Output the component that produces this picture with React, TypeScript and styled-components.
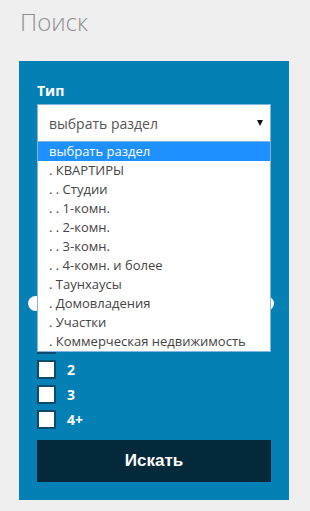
import React from 'react';
import styled, { createGlobalStyle } from 'styled-components';

const GlobalStyle = createGlobalStyle`
  html, body {
    margin: 0;
    padding: 0;
    background: #efefef;
  }
  body {
    font-family: "Open Sans", "Liberation Sans", sans-serif;
  }
`;

const Page = styled.div`
  width: 310px;
  height: 511px;
  overflow: hidden;
  padding: 0 21px 0 19px;
  box-sizing: border-box;
`;

const Title = styled.h2`
  margin: 0;
  padding: 6px 0 0 1px;
  height: 61px;
  box-sizing: border-box;
  font-size: 24px;
  line-height: 32px;
  font-weight: 300;
  color: #8f8f8f;
`;

const Panel = styled.form`
  background: #0580b5;
  padding: 20px 18px 18px;
  display: flex;
  flex-direction: column;
`;

const Label = styled.div`
  color: #fff;
  font-weight: 700;
  font-size: 14px;
  line-height: 20px;
  height: 23px;
`;

const SelectWrap = styled.div`
  position: relative;
`;

const SelectBox = styled.div`
  height: 38px;
  box-sizing: border-box;
  border: 1px solid #86b4dd;
  background: #fff;
  display: flex;
  align-items: center;
  justify-content: space-between;
  padding: 0 7px 0 11px;
  font-size: 14px;
  color: #555;
`;

const Arrow = styled.span`
  width: 0;
  height: 0;
  border-left: 3.5px solid transparent;
  border-right: 3.5px solid transparent;
  border-top: 6px solid #111;
  margin-top: -1px;
`;

const Options = styled.ul`
  position: absolute;
  top: 38px;
  left: 0;
  right: 0;
  margin: 0;
  padding: 0;
  list-style: none;
  background: #fff;
  border: 1px solid #86b4dd;
  border-top: none;
  z-index: 5;
`;

const Option = styled.li<{ $active?: boolean }>`
  height: 19px;
  line-height: 19px;
  padding-left: 11px;
  font-size: 13px;
  color: ${(p) => (p.$active ? '#fff' : '#444')};
  background: ${(p) => (p.$active ? '#1e90ff' : 'transparent')};
  white-space: nowrap;
`;

// area covered by the open dropdown: only the range slider peeks out
const Covered = styled.div`
  height: 193px;
  display: flex;
  flex-direction: column;
  justify-content: flex-end;
`;

const Slider = styled.div`
  position: relative;
  height: 6px;
  margin: 0 3px 29px -3px;
  background: #0b5d86;
`;

const Handle = styled.span<{ $side: 'left' | 'right' }>`
  position: absolute;
  top: -4px;
  ${(p) => (p.$side === 'left' ? 'left: -6px;' : 'right: -6px;')}
  width: 15px;
  height: 15px;
  border-radius: 50%;
  background: #fff;
`;

const Checks = styled.div`
  display: flex;
  flex-direction: column;
  gap: 6px;
`;

const CheckRow = styled.label`
  display: flex;
  align-items: center;
  gap: 11px;
  height: 19px;
  color: #fff;
  font-weight: 700;
  font-size: 14px;
`;

const Box = styled.span`
  width: 19px;
  height: 19px;
  box-sizing: border-box;
  border: 2px solid #0a4a6c;
  background: #fff;
`;

const Button = styled.button`
  margin-top: 11px;
  height: 42px;
  border: none;
  background: #04293a;
  color: #fff;
  font-family: "Liberation Sans", Arial, sans-serif;
  font-weight: 700;
  font-size: 17px;
  padding: 0;
`;

const options = [
  'выбрать раздел',
  '. КВАРТИРЫ',
  '. . Студии',
  '. . 1-комн.',
  '. . 2-комн.',
  '. . 3-комн.',
  '. . 4-комн. и более',
  '. Таунхаусы',
  '. Домовладения',
  '. Участки',
  '. Коммерческая недвижимость',
];

export default function App() {
  return (
    <Page>
      <GlobalStyle />
      <Title>Поиск</Title>
      <Panel onSubmit={(e) => e.preventDefault()}>
        <Label>Тип</Label>
        <SelectWrap>
          <SelectBox>
            выбрать раздел
            <Arrow />
          </SelectBox>
          <Options>
            {options.map((o, i) => (
              <Option key={o} $active={i === 0}>
                {o}
              </Option>
            ))}
          </Options>
        </SelectWrap>
        <Covered>
          <Slider>
            <Handle $side="left" />
            <Handle $side="right" />
          </Slider>
        </Covered>
        <Checks>
          {['', '2', '3', '4+'].map((n) => (
            <CheckRow key={n || 'first'}>
              <Box />
              {n}
            </CheckRow>
          ))}
        </Checks>
        <Button type="submit">Искать</Button>
      </Panel>
    </Page>
  );
}
